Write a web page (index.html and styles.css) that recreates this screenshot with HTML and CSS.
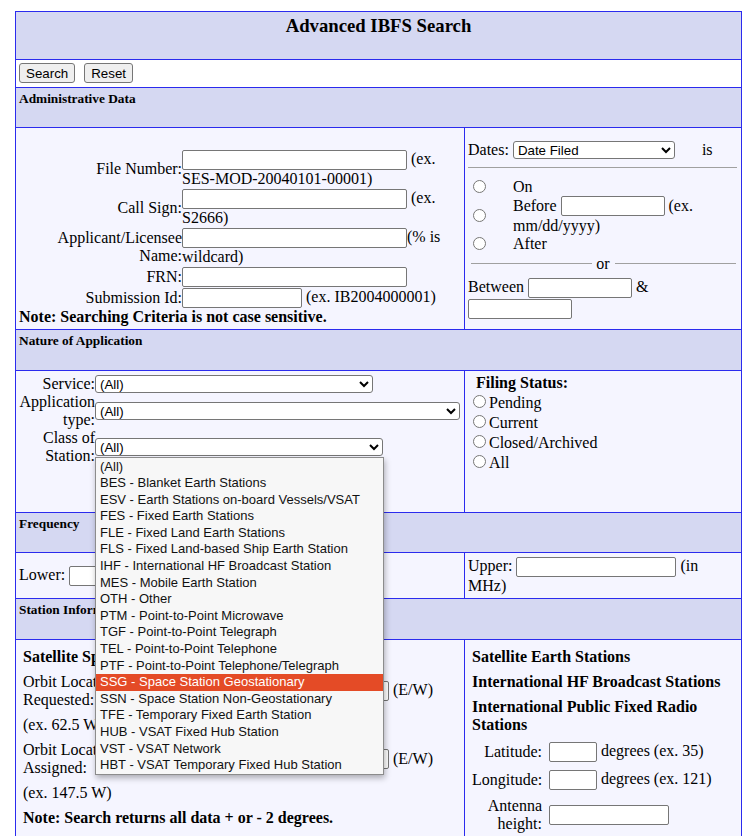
FILE: index.html
```html
<!DOCTYPE html>
<html lang="en">
<head>
<meta charset="utf-8">
<title>Advanced IBFS Search</title>
<link rel="stylesheet" href="styles.css">
</head>
<body>
<form class="search">
  <div class="cell span title"><h3>Advanced IBFS Search</h3></div>
  <div class="cell span buttons">
    <button type="button" class="btn">Search</button>
    <button type="reset" class="btn">Reset</button>
  </div>

  <div class="cell span hdr">Administrative Data</div>
  <div class="cell admin-left">
    <div class="fields">
      <div class="lbl">File Number:</div>
      <div class="val"><input class="txt w225" type="text"> (ex. SES-MOD-20040101-00001)</div>
      <div class="lbl">Call Sign:</div>
      <div class="val"><input class="txt w225" type="text"> (ex. S2666)</div>
      <div class="lbl">Applicant/Licensee Name:</div>
      <div class="val"><input class="txt w225" type="text">(% is wildcard)</div>
      <div class="lbl">FRN:</div>
      <div class="val"><input class="txt w225" type="text"></div>
      <div class="lbl">Submission Id:</div>
      <div class="val"><input class="txt w120" type="text"> (ex. IB2004000001)</div>
    </div>
    <div class="bold">Note: Searching Criteria is not case sensitive.</div>
  </div>
  <div class="cell admin-right">
    <div class="dates">
      <span>Dates:</span>
      <select class="sel w162"><option>Date Filed</option></select>
      <span class="is">is</span>
    </div>
    <div class="rule"></div>
    <div class="when">
      <div class="r"><input type="radio" name="when"></div>
      <div>On</div>
      <div class="r"><input type="radio" name="when"></div>
      <div>Before <input class="txt w104" type="text"> (ex. mm/dd/yyyy)</div>
      <div class="r"><input type="radio" name="when"></div>
      <div>After</div>
    </div>
    <div class="or"><span>or</span></div>
    <div class="between">Between <input class="txt w104" type="text"> &amp; <input class="txt w104" type="text"></div>
  </div>

  <div class="cell span hdr">Nature of Application</div>
  <div class="cell nature-left">
    <div class="nfields">
      <div class="lbl">Service:</div>
      <div class="nval"><select class="sel w278"><option>(All)</option></select></div>
      <div class="lbl">Application type:</div>
      <div class="nval"><select class="sel w365"><option>(All)</option></select></div>
      <div class="lbl">Class of Station:</div>
      <div class="nval">
        <div class="dd-wrap">
          <select class="sel w288"><option>(All)</option></select>
          <ul class="popup">
            <li>(All)</li>
            <li>BES - Blanket Earth Stations</li>
            <li>ESV - Earth Stations on-board Vessels/VSAT</li>
            <li>FES - Fixed Earth Stations</li>
            <li>FLE - Fixed Land Earth Stations</li>
            <li>FLS - Fixed Land-based Ship Earth Station</li>
            <li>IHF - International HF Broadcast Station</li>
            <li>MES - Mobile Earth Station</li>
            <li>OTH - Other</li>
            <li>PTM - Point-to-Point Microwave</li>
            <li>TGF - Point-to-Point Telegraph</li>
            <li>TEL - Point-to-Point Telephone</li>
            <li>PTF - Point-to-Point Telephone/Telegraph</li>
            <li class="on">SSG - Space Station Geostationary</li>
            <li>SSN - Space Station Non-Geostationary</li>
            <li>TFE - Temporary Fixed Earth Station</li>
            <li>HUB - VSAT Fixed Hub Station</li>
            <li>VST - VSAT Network</li>
            <li>HBT - VSAT Temporary Fixed Hub Station</li>
          </ul>
        </div>
      </div>
    </div>
  </div>
  <div class="cell nature-right">
    <div class="bold fs-title">Filing Status:</div>
    <label class="status"><input type="radio" name="status">Pending</label>
    <label class="status"><input type="radio" name="status">Current</label>
    <label class="status"><input type="radio" name="status">Closed/Archived</label>
    <label class="status"><input type="radio" name="status">All</label>
  </div>

  <div class="cell span hdr">Frequency</div>
  <div class="cell freq"><div>Lower: <input class="txt w160" type="text"> (in MHz)</div></div>
  <div class="cell freq"><div>Upper: <input class="txt w160" type="text"> (in MHz)</div></div>

  <div class="cell span hdr">Station Information</div>
  <div class="cell station">
    <div class="bold">Satellite Space Stations</div>
    <div class="orbit">
      <div>Orbit Location Requested:</div>
      <div><input class="txt w200" type="text"> (E/W)</div>
    </div>
    <div>(ex. 62.5 W)</div>
    <div class="orbit">
      <div>Orbit Location Assigned:</div>
      <div><input class="txt w200" type="text"> (E/W)</div>
    </div>
    <div>(ex. 147.5 W)</div>
    <div class="bold">Note: Search returns all data + or - 2 degrees.</div>
  </div>
  <div class="cell station">
    <div class="bold">Satellite Earth Stations</div>
    <div class="bold">International HF Broadcast Stations</div>
    <div class="bold">International Public Fixed Radio Stations</div>
    <div class="coords">
      <div class="lbl">Latitude:</div>
      <div><input class="txt w48" type="text"> degrees (ex. 35)</div>
      <div class="lbl">Longitude:</div>
      <div><input class="txt w48" type="text"> degrees (ex. 121)</div>
      <div class="lbl">Antenna height:</div>
      <div><input class="txt w120" type="text"></div>
    </div>
  </div>
</form>
</body>
</html>
```

FILE: styles.css
```css
html, body {
  margin: 0;
  padding: 0;
}
body {
  font-family: "Liberation Serif", "Times New Roman", serif;
  font-size: 16px;
  color: #000;
  background: #fff;
}

.search {
  display: grid;
  grid-template-columns: 448px 276px;
  grid-template-rows: 47px 27px 39px 201px 40px 141px 39px 45px 40px 200px;
  gap: 1px;
  padding: 1px;
  width: max-content;
  margin: 11px 0 0 15px;
  background: #2b2bee;
}
.cell {
  box-sizing: border-box;
  background: #f5f5ff;
}
.span {
  grid-column: 1 / -1;
}
.bold {
  font-weight: bold;
}

.title {
  background: #d5d8f2;
  text-align: center;
  padding-top: 3px;
}
.title h3 {
  margin: 0;
  font-size: 18.72px;
}

.buttons {
  background: #fff;
  padding: 3px 3px 0;
  display: flex;
  gap: 9px;
  align-items: flex-start;
}
.btn {
  box-sizing: border-box;
  height: 20px;
  margin: 0;
  padding: 0 6px;
  font: 13.33px "Liberation Sans", Arial, sans-serif;
  color: #000;
  background: #efefef;
  border: 1px solid #767676;
  border-radius: 3px;
}

.hdr {
  background: #d5d8f2;
  font-weight: bold;
  font-size: 13.33px;
  padding: 3px 0 0 3px;
}

.txt {
  box-sizing: border-box;
  height: 20px;
  margin: 0.5px 0;
  padding: 1px 2px;
  font: 13.33px "Liberation Sans", Arial, sans-serif;
  border: 1px solid #767676;
  border-radius: 2px;
  background: #fff;
}
.sel {
  box-sizing: border-box;
  height: 18px;
  margin: 0;
  font: 13.33px "Liberation Sans", Arial, sans-serif;
  color: #000;
  border: 1px solid #767676;
  border-radius: 3px;
  background: #fff;
}
.w48 { width: 48px; }
.w104 { width: 104px; }
.w120 { width: 120px; }
.w160 { width: 160px; }
.w162 { width: 162px; }
.w200 { width: 200px; }
.w225 { width: 225px; }
.w278 { width: 278px; }
.w288 { width: 288px; }
.w365 { width: 365px; }

/* Administrative data */
.admin-left {
  padding: 21px 3px 0 3px;
}
.fields {
  display: grid;
  grid-template-columns: 163px 1fr;
}
.lbl {
  text-align: right;
  align-self: center;
}
.admin-right {
  padding: 11px 4px 0 3px;
}
.dates {
  display: flex;
  align-items: center;
  height: 21px;
}
.dates .sel {
  margin-left: 4px;
}
.dates .is {
  margin-left: 27px;
}
.rule {
  border-top: 1px solid #a0a0a0;
  margin: 7px 0 9.5px;
}
.when {
  display: grid;
  grid-template-columns: 45px 1fr;
}
.when .r {
  align-self: center;
}
.when input[type="radio"] {
  display: block;
  margin: 0 0 0 5px;
}
.or {
  display: flex;
  align-items: center;
  margin-top: 2px;
  padding: 0 1px 0 3px;
}
.or::before,
.or::after {
  content: "";
  flex: 1;
  border-top: 1px solid #a0a0a0;
}
.or span {
  margin: 0 5px 0 4px;
}
.between {
  margin-top: 4.5px;
}

/* Nature of application */
.nature-left {
  padding: 4px 3px 0;
}
.nfields {
  display: grid;
  grid-template-columns: 76px auto;
  justify-content: start;
}
.nval {
  align-self: center;
}
.nval .sel {
  display: block;
}
.dd-wrap {
  position: relative;
}
.popup {
  position: absolute;
  left: 0;
  top: calc(100% + 1px);
  z-index: 10;
  box-sizing: border-box;
  width: 289px;
  margin: 0;
  padding: 0.5px 0 0;
  list-style: none;
  background: #f7f7f7;
  border: 1px solid #8c8c8c;
  box-shadow: 1px 3px 6px rgba(0, 0, 0, 0.3);
  font: 13px "Liberation Sans", Arial, sans-serif;
  color: #111;
}
.popup li {
  height: 16.6px;
  line-height: 16.6px;
  padding-left: 4px;
  white-space: nowrap;
}
.popup li.on {
  background: #e44b26;
  color: #fff;
}
.nature-right {
  padding: 3px 3px 0;
}
.fs-title {
  padding-left: 8px;
}
.status {
  display: block;
}
.status input[type="radio"] {
  margin: 3px 3px 0 5px;
}

/* Frequency */
.freq {
  display: flex;
  align-items: center;
  padding: 0 4px 0 3px;
}

/* Station information */
.station {
  display: flex;
  flex-direction: column;
  gap: 7.2px;
  padding: 7.5px 4px 0 7px;
}
.orbit {
  display: grid;
  grid-template-columns: 150px auto;
  column-gap: 16px;
  align-items: center;
  justify-content: start;
}
.coords {
  display: grid;
  grid-template-columns: 70px auto;
  column-gap: 7px;
  row-gap: 7px;
  align-items: center;
  justify-content: start;
}
```
